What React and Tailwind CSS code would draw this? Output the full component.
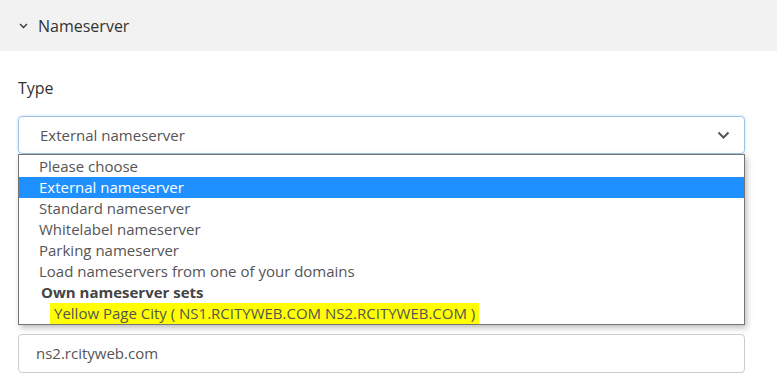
import React from 'react';

const options = [
  'Please choose',
  'External nameserver',
  'Standard nameserver',
  'Whitelabel nameserver',
  'Parking nameserver',
  'Load nameservers from one of your domains',
];

const App = () => {
  return (
    <div className="w-[777px] h-[385px] overflow-hidden bg-white text-[#444] font-['Open_Sans',sans-serif]">
      <div className="h-[51px] bg-[#f2f2f2] flex items-center pl-[19px] gap-[10px]">
        <svg width="9" height="6" viewBox="0 0 9 6" className="mt-[1px]">
          <path d="M1 1l3.5 3.5L8 1" fill="none" stroke="#333" strokeWidth="1.3" />
        </svg>
        <span className="text-[16px] text-[#333]">Nameserver</span>
      </div>

      <div className="px-[18px] w-[763px]">
        <div className="pt-[26px] text-[16px] leading-[22px] text-[#333]">Type</div>

        <div className="relative mt-[17px]">
          <div className="h-[38px] border border-[#9fc3e6] rounded-[4px] flex items-center justify-between pl-[21px] pr-[14px] shadow-[0_0_3px_rgba(102,175,233,0.4)]">
            <span className="text-[15px] text-[#555]">External nameserver</span>
            <svg width="13" height="8" viewBox="0 0 13 8">
              <path d="M1.5 1.5l5 5 5-5" fill="none" stroke="#555" strokeWidth="2" />
            </svg>
          </div>

          <div className="absolute left-0 right-0 top-[38px] z-10 bg-white border border-[#767676] shadow-[2px_3px_6px_rgba(0,0,0,0.25)] pt-[1px] h-[171px]">
            {options.map((o, i) => (
              <div
                key={o}
                className={`h-[21px] leading-[21px] pl-[20px] text-[15px] ${i === 1 ? 'bg-[#1e90ff] text-white' : 'text-[#555]'}`}
              >
                {o}
              </div>
            ))}
            <div className="h-[21px] leading-[21px] pl-[22px] text-[15px] font-bold text-[#444]">Own nameserver sets</div>
            <div className="h-[21px] leading-[21px] pl-[31px] text-[15px] text-[#555]">
              <span className="bg-[#ffff00] px-[4px] pb-[1px]">Yellow Page City ( NS1.RCITYWEB.COM NS2.RCITYWEB.COM )</span>
            </div>
          </div>
        </div>

        <div className="mt-[180px] h-[39px] border border-[#ccc] rounded-[4px] flex items-center pl-[17px]">
          <span className="text-[15px] text-[#555]">ns2.rcityweb.com</span>
        </div>
      </div>
    </div>
  );
};

export default App;
